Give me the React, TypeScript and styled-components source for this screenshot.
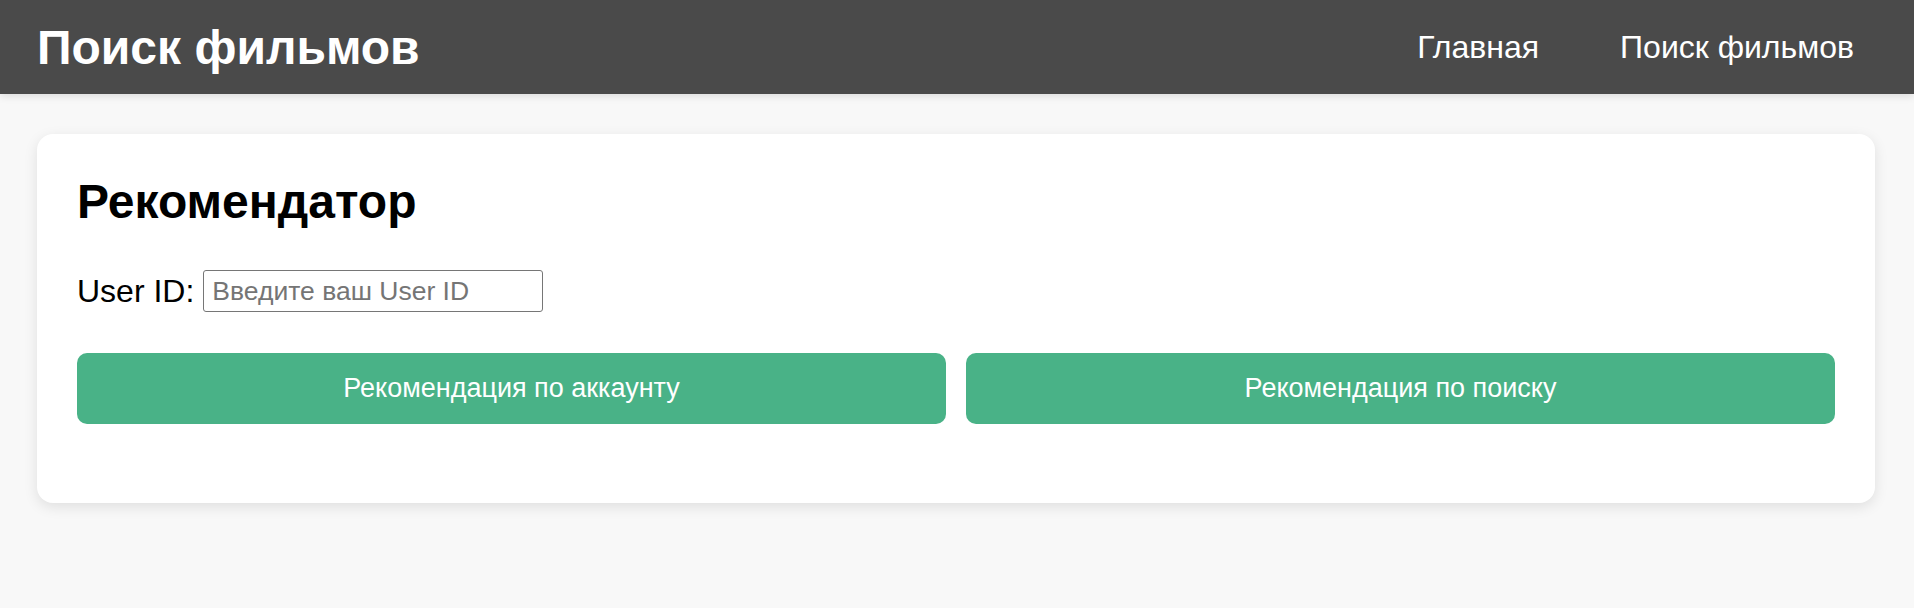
import React from "react";
import styled, { createGlobalStyle } from "styled-components";

const GlobalStyle = createGlobalStyle`
  html, body {
    margin: 0;
    padding: 0;
    background: #f8f8f8;
    font-family: "Liberation Sans", Arial, sans-serif;
  }
  * { box-sizing: border-box; }
`;

const Header = styled.header`
  height: 94px;
  background: #4a4a4a;
  display: flex;
  align-items: center;
  justify-content: space-between;
  padding: 0 60px 0 37px;
  box-shadow: 0 2px 8px rgba(0, 0, 0, 0.12);
`;

const Logo = styled.h1`
  margin: 0;
  color: #ffffff;
  font-size: 48px;
  font-weight: 700;
`;

const Nav = styled.nav`
  display: flex;
  align-items: center;
  gap: 81px;
`;

const NavLink = styled.a`
  color: #ffffff;
  font-size: 32px;
  text-decoration: none;
`;

const Main = styled.main`
  padding: 40px 39px 40px 37px;
`;

const Card = styled.section`
  background: #ffffff;
  border-radius: 16px;
  box-shadow: 0 4px 14px rgba(0, 0, 0, 0.1);
  padding: 40px 40px 79px 40px;
  display: flex;
  flex-direction: column;
  gap: 41px;
`;

const Title = styled.h2`
  margin: 0;
  font-size: 48px;
  font-weight: 700;
  color: #000000;
`;

const Field = styled.div`
  display: flex;
  align-items: center;
  gap: 9px;
`;

const Label = styled.label`
  font-size: 32px;
  color: #000000;
`;

const Input = styled.input`
  width: 340px;
  height: 42px;
  border: 1.5px solid #767676;
  border-radius: 3px;
  padding: 0 8px;
  font-family: "Liberation Sans", Arial, sans-serif;
  font-size: 26.5px;
  color: #000;
  &::placeholder {
    color: #757575;
  }
`;

const Buttons = styled.div`
  display: grid;
  grid-template-columns: 1fr 1fr;
  gap: 20px;
`;

const Button = styled.button`
  height: 71px;
  border: none;
  border-radius: 10px;
  background: #49b287;
  color: #ffffff;
  font-family: "Liberation Sans", Arial, sans-serif;
  font-size: 27px;
  cursor: pointer;
`;

export default function App() {
  return (
    <>
      <GlobalStyle />
      <Header>
        <Logo>Поиск фильмов</Logo>
        <Nav>
          <NavLink href="#">Главная</NavLink>
          <NavLink href="#">Поиск фильмов</NavLink>
        </Nav>
      </Header>
      <Main>
        <Card>
          <Title>Рекомендатор</Title>
          <Field>
            <Label htmlFor="uid">User ID:</Label>
            <Input id="uid" placeholder="Введите ваш User ID" />
          </Field>
          <Buttons>
            <Button>Рекомендация по аккаунту</Button>
            <Button>Рекомендация по поиску</Button>
          </Buttons>
        </Card>
      </Main>
    </>
  );
}
